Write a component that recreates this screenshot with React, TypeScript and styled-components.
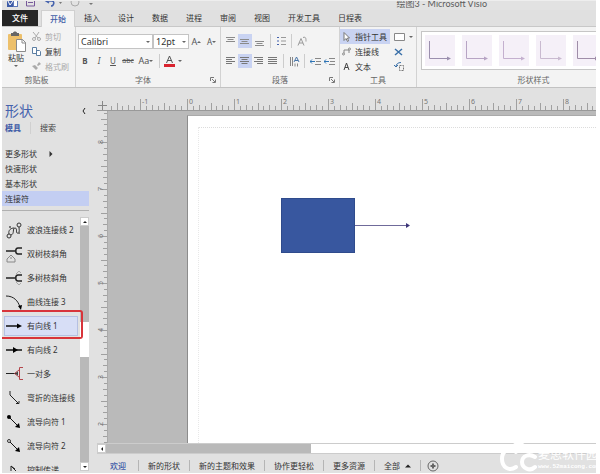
import React, { useState } from "react";
import styled, { createGlobalStyle, css } from "styled-components";

const Global = createGlobalStyle`
  *, *::before, *::after { box-sizing: border-box; }
  html, body { margin: 0; background: #fff; }
  body, button, input, select {
    font-family: "Noto Sans", "Noto Sans CJK SC", sans-serif;
    font-size: 8px;
    line-height: 12px;
    color: #333;
  }
  button {
    border: 0; padding: 0; margin: 0; background: none; white-space: nowrap;
    display: inline-flex; align-items: center;
  }
  svg { display: block; flex: none; }
`;

const Window = styled.div`
  position: relative;
  height: 100vh;
  padding: 0 4px 1px 2px;
  display: grid;
  grid-template-rows: 10px 17px 61px 1fr;
  overflow: hidden;
`;

const TitleBar = styled.header`
  display: flex;
  align-items: flex-end;
  justify-content: space-between;
  overflow: hidden;
  background: #e2e2e2;
  border-top: 1px solid #eee;
`;
const WindowTitle = styled.span`
  margin-right: 109px;
  font-family: Lato, "Noto Sans CJK SC", sans-serif;
  font-size: 9px;
  color: #5c5c5c;
`;

const TabBar = styled.nav`
  display: flex;
  background: #e0e0e0;
  border-bottom: 1px solid #c8c8c8;
`;
const RibbonTab = styled.button<{ $kind?: "file" | "active" }>`
  justify-content: center;
  padding: 0 9px;
  height: 16px;
  ${(p) => p.$kind === "file" && css`
    background: #262626; color: #fff; padding: 0 10px; margin-right: 3px; font-weight: 500;
  `}
  ${(p) => p.$kind === "active" && css`
    background: #f4f4f4; color: #3f5da8; padding: 0 8px; height: 17px; font-weight: 500;
    border: 1px solid #d0d0d0; border-bottom: 0;
  `}
`;

const Ribbon = styled.section`
  display: grid;
  grid-template-columns: 74px 145px 119px 77px minmax(0, 1fr);
  background: #f3f3f3;
  border-bottom: 1px solid #c2c2c2;
`;
const Group = styled.div`
  display: grid;
  grid-template-rows: 47px 12px;
  border-right: 1px solid #d2d2d2;
  &:last-child { border-right: 0; }
`;
const GroupLabel = styled.div<{ $lead?: number }>`
  display: grid;
  grid-template-columns: ${(p) => p.$lead ?? 10}px 1fr 10px;
  text-align: center;
  color: #666;
  svg { align-self: center; }
`;
const Clipboard = styled.div`
  display: grid;
  grid-template-columns: 28px 1fr;
`;
const PasteButton = styled.button`
  flex-direction: column;
  padding-top: 4px;
`;
const Stack = styled.div`
  display: flex;
  flex-direction: column;
  padding-top: 2px;
`;
const ToolButton = styled.button<{ $muted?: boolean; $on?: boolean }>`
  height: 15px;
  gap: 4px;
  padding-left: 2px;
  color: ${(p) => (p.$muted ? "#aaa" : "#333")};
  background: ${(p) => (p.$on ? "#c9d3f2" : "transparent")};
`;
const FontRows = styled.div`
  display: flex;
  flex-direction: column;
  gap: 5px;
  padding: 7px 0 0 2px;
`;
const Row = styled.div`
  display: flex;
  align-items: center;
`;
const Select = styled.div<{ $w: number }>`
  position: relative;
  width: ${(p) => p.$w}px;
  select {
    display: block;
    width: 100%;
    height: 15px;
    padding: 0 2px;
    font-size: 9px;
    appearance: none;
    border: 1px solid #c4c4c4;
    border-radius: 0;
    background: #fff;
  }
  svg { position: absolute; right: 3px; top: 6px; pointer-events: none; }
`;
const Glyph = styled.button<{ $w?: number; $size?: number; $on?: boolean }>`
  justify-content: center;
  width: ${(p) => p.$w ?? 14}px;
  height: 14px;
  font-size: ${(p) => p.$size ?? 8}px;
  color: #555;
  background: ${(p) => (p.$on ? "#c9d3f2" : "transparent")};
`;
const Rule = styled.span`
  width: 1px;
  height: 14px;
  margin: 0 3px;
  background: #ccc;
`;
const ParaRows = styled.div`
  display: flex;
  flex-direction: column;
  gap: 6px;
  padding: 7px 0 0 2px;
`;
const Tools = styled.div`
  display: grid;
  grid-template-columns: 50px 1fr;
  gap: 2px;
`;
const Gallery = styled.div`
  display: flex;
  gap: 7px;
  height: 39px;
  margin: 4px 0 0 4px;
  padding: 3px;
  overflow: hidden;
  background: #fff;
  border: 1px solid #c6c6c6;
  border-right: 0;
`;
const StyleTile = styled.button`
  flex: none;
  justify-content: center;
  width: 30px;
  height: 31px;
  background: #f5f0f8;
`;

const Workspace = styled.main`
  min-height: 0;
  display: grid;
  grid-template-columns: 87px minmax(0, 1fr);
  gap: 8px;
  padding-top: 8px;
  background: #e1e1e1;
`;
const Sidebar = styled.aside`
  min-height: 0;
  display: flex;
  flex-direction: column;
`;
const SidebarHead = styled.div`
  display: flex;
  align-items: center;
  justify-content: space-between;
  padding: 5px 3px 0;
  h2 {
    margin: 0;
    font-size: 14px;
    line-height: 20px;
    font-weight: 400;
    color: #4562ad;
  }
`;
const Modes = styled.div`
  display: flex;
  gap: 9px;
  padding: 1px 3px 12px;
`;
const Mode = styled.button<{ $on?: boolean }>`
  color: ${(p) => (p.$on ? "#3c59a6" : "#444")};
  font-weight: ${(p) => (p.$on ? 700 : 400)};
  & + & { border-left: 1px solid #d0d0d0; padding-left: 9px; }
`;
const Stencil = styled.button<{ $on?: boolean }>`
  flex: none;
  gap: 11px;
  height: 15px;
  padding-left: 3px;
  background: ${(p) => (p.$on ? "#c3cef2" : "transparent")};
`;
const Shapes = styled.div`
  flex: 1;
  min-height: 0;
  display: grid;
  grid-template-columns: 76px 9px;
  gap: 2px;
  margin-top: 4px;
  padding: 6px 0 2px;
  border-top: 1px solid #b0b0b0;
`;
const ShapeList = styled.div`
  min-height: 0;
  overflow: hidden;
  display: flex;
  flex-direction: column;
`;
const ShapeItem = styled.button<{ $on?: boolean }>`
  flex: none;
  gap: 4px;
  height: 20px;
  margin: 3px 0 1px 2px;
  padding-left: 1px;
  border: 1px solid ${(p) => (p.$on ? "#b5c0e2" : "transparent")};
  background: ${(p) => (p.$on ? "#d7def6" : "transparent")};
`;
const VScroll = styled.div`
  display: flex;
  flex-direction: column;
  background: #b9b9b9;
`;
const ScrollButton = styled.button`
  flex: none;
  justify-content: center;
  width: 9px;
  height: 9px;
  background: #fff;
  border: 1px solid #ccc;
`;
const VThumb = styled.div`
  height: 35px;
  margin: 96px 0 auto;
  background: #fff;
`;
const Highlight = styled.div`
  position: absolute;
  left: 2px;
  top: 310px;
  width: 81px;
  height: 29px;
  border: 2px solid #d8343a;
  border-left: 0;
  border-radius: 0 3px 3px 0;
  pointer-events: none;
`;

const Editor = styled.section`
  min-height: 0;
  min-width: 0;
  display: grid;
  grid-template-columns: 11px minmax(0, 1fr);
  grid-template-rows: 15px minmax(0, 1fr) 11px 19px;
`;
const TopRuler = styled.div`
  grid-column: 1 / -1;
  overflow: hidden;
  border-bottom: 1px solid #999;
`;
const SideRuler = styled.div`
  overflow: hidden;
  border-right: 1px solid #aaa;
`;
const Desk = styled.div`
  overflow: hidden;
  display: flex;
  padding: 4px 0 0 79px;
  background: #bababa;
`;
const Page = styled.div`
  position: relative;
  flex: 1;
  padding: 11px 0 0 10px;
  background: #fff;
  border-left: 1px solid #8c8c8c;
  border-top: 1px solid #aaa;
`;
const Margins = styled.div`
  height: 100%;
  border-top: 1px dotted #dcdcdc;
  border-left: 1px dotted #e8e8e8;
`;
const Box = styled.div`
  position: absolute;
  left: 93px;
  top: 82px;
  width: 74px;
  height: 55px;
  background: #38579f;
  border: 1px solid #2f4b8c;
`;
const Connector = styled.svg`
  position: absolute;
  left: 167px;
  top: 106px;
`;
const HScroll = styled.div`
  grid-column: 1 / -1;
  display: grid;
  grid-template-columns: 10px 204fr 285fr;
  border-top: 1px solid #ccc;
  border-bottom: 1px solid #ccc;
  background: #b9b9b9;
`;
const HThumb = styled.div`
  grid-column: 3;
  background: #fff;
`;
const Sheets = styled.nav`
  grid-column: 1 / -1;
  display: flex;
  align-items: center;
  padding: 4px 0 0 3px;
`;
const Sheet = styled.button<{ $on?: boolean }>`
  gap: 5px;
  height: 11px;
  padding: 0 9px;
  border-right: 1px solid #b5b5b5;
  color: ${(p) => (p.$on ? "#3c59a6" : "#333")};
  font-weight: ${(p) => (p.$on ? 500 : 400)};
  &:first-child { padding: 0 12px 0 10px; }
`;
const AddSheet = styled.button`
  padding-left: 6px;
`;
const Watermark = styled.div`
  position: absolute;
  right: 4px;
  bottom: 0;
  width: 98px;
  height: 32px;
  display: flex;
  overflow: hidden;
  color: #fff;
  white-space: nowrap;
  div { padding-top: 6px; font-size: 12px; line-height: 14px; }
  small { display: block; font: 6px/10px "Liberation Mono", monospace; font-weight: 700; }
`;

const Caret = ({ dir = "down", color = "#666", size = 4 }: { dir?: "down" | "up" | "left" | "right"; color?: string; size?: number }) => {
  const d = { down: "M0 1h4L2 3z", up: "M0 3h4L2 1z", left: "M3 0v4L1 2z", right: "M1 0v4l2-2z" }[dir];
  return <svg width={size} height={size} viewBox="0 0 4 4"><path d={d} fill={color} /></svg>;
};

const Launcher = () => (
  <svg width="6" height="6" viewBox="0 0 6 6" fill="none" stroke="#777"><path d="M.5 4V.5H4M2 2l3 3M5.500 2.500v3h-3" /></svg>
);

const Lines = ({ align, rows = 4 }: { align: "l" | "c" | "r" | "j" | "t" | "m" | "b"; rows?: number }) => {
  const vertical = "tmb".includes(align);
  const n = vertical ? 3 : rows;
  const y0 = align === "b" ? 5 : align === "m" ? 3 : 1;
  return (
    <svg width="10" height="11" viewBox="0 0 10 11" stroke={vertical ? "#8b8b8b" : "#777"}>
      {Array.from({ length: n }, (_, i) => {
        const w = i % 2 === 0 ? 9 : 6;
        const x = align === "l" ? 0 : align === "r" ? 9 - w : align === "j" ? 0 : (9 - w) / 2;
        const y = y0 + i * 2 + 0.5;
        return <line key={i} x1={x} x2={align === "j" ? 9 : x + w} y1={y} y2={y} />;
      })}
    </svg>
  );
};

const shapeIcons: Record<string, React.ReactNode> = {
  wave: <g fill="none" stroke="#333"><circle cx="3" cy="14" r="2" /><circle cx="13" cy="3" r="2" /><path d="M5 13c4-1 1-7 4-7s0 6 3 5c2-1 1-3 1-6M3 12C2 8 5 6 8 6" /><path d="M3 4l2 2M5 4L3 6M12 10l2 2M14 10l-2 2" stroke="#777" /></g>,
  double: <g fill="none" stroke="#222"><path d="M0 5h9M16 2h-4c-3 0-3 6 0 6h4" strokeWidth="1.500" /><path d="M1 16v-3l4-4 4 4v3zM5 13v-2" stroke="#888" /></g>,
  multi: <g fill="none" stroke="#222"><path d="M0 8h9M16 5h-4c-3 0-3 6 0 6h4" strokeWidth="1.500" /><path d="M10 4l3-3 2 2M10 12l3 3 2-2" stroke="#aaa" /></g>,
  curve: <g><path d="M0 2c8 0 12 5 14 11" fill="none" stroke="#222" /><path d="M12 12l4-1-1 5z" /></g>,
  arrow: <g><path d="M0 8h12" stroke="#111" strokeWidth="1.500" /><path d="M11 5.500l5 2.500-5 2.500z" /></g>,
  arrow2: <g><path d="M0 8h16" stroke="#111" strokeWidth="1.500" /><path d="M7 5l5 3-5 3z" /></g>,
  many: <g fill="none"><path d="M0 7.500h10" stroke="#222" /><path d="M17 1.500h-3.500v12H17M13 4L8.500 7.500 13 11" stroke="#b4454b" /><path d="M9 7.500l3-2v4z" fill="#444" /></g>,
  bend: <g fill="none" stroke="#222"><path d="M4 1v4l8 8" /><path d="M10 13.500h3V11" /></g>,
  flow1: <g><path d="M3 3l10 10" stroke="#111" /><circle cx="3" cy="3" r="2" /><path d="M14 14l-5-1 4-4z" /></g>,
  flow2: <g><path d="M4 4l9 9" stroke="#111" /><circle cx="3" cy="3" r="1.500" fill="none" stroke="#333" /><path d="M14 14l-5-1 4-4z" /></g>,
  control: <path d="M0 11h5V4l7 7h4M5 4l4 3" fill="none" stroke="#222" />,
};

const shapes: [string, string][] = [
  ["wave", "波浪连接线 2"], ["double", "双树枝斜角"], ["multi", "多树枝斜角"], ["curve", "曲线连接 3"],
  ["arrow", "有向线 1"], ["arrow2", "有向线 2"], ["many", "一对多"], ["bend", "弯折的连接线"],
  ["flow1", "流导向符 1"], ["flow2", "流导向符 2"], ["control", "控制传递"],
];

const INCH = 47;
const tickLength = (i: number) => (i % 8 === 0 ? 11 : i % 4 === 0 ? 7 : i % 2 === 0 ? 5 : 4);

const HorizontalRuler = () => (
  <svg width="100%" height="15">
    {Array.from({ length: 240 }, (_, n) => n - 13).map((i) => {
      const x = Math.round(90 + (i * INCH) / 8) + 0.5;
      return <line key={i} x1={x} x2={x} y1={14 - tickLength(Math.abs(i))} y2="14" stroke="#a0a0a0" />;
    })}
    {[-1, 0, 1, 2, 3, 4, 5, 6, 7, 8].map((i) => (
      <text key={i} x={92 + i * INCH} y="8" fontSize="7" fill="#777">{i}</text>
    ))}
    <path d="M1 9.500h9M5.500 5v9" stroke="#888" />
  </svg>
);

const VerticalRuler = () => (
  <svg width="11" height="100%">
    {Array.from({ length: 200 }, (_, i) => {
      const y = Math.round(31 + ((i - 5) * INCH) / 8) + 0.5;
      return <line key={i} y1={y} y2={y} x1={11 - Math.min(tickLength(Math.abs(i - 5)), 8)} x2="11" stroke="#a0a0a0" />;
    })}
    {[8, 7, 6, 5, 4, 3, 2].map((v, i) => {
      const y = 33 + i * INCH;
      return <text key={v} x="6" y={y} fontSize="7" fill="#777" transform={`rotate(-90 6 ${y})`}>{v}</text>;
    })}
  </svg>
);

export default function App() {
  const [selected, setSelected] = useState("arrow");
  return (
    <>
      <Global />
      <Window>
        <TitleBar>
          <svg width="96" height="9" viewBox="0 0 96 9" fill="none">
            <rect x="5" y="-3" width="9" height="9" fill="#3f5da8" /><path d="M6 0l2 4 3-4" stroke="#fff" />
            <rect x="11.500" y="-.5" width="4" height="6" fill="#fff" stroke="#6179b8" />
            <path d="M24.500-2v7h8v-7M26 1.500h5" stroke="#77599a" />
            <path d="M45 0h5c3 0 2 5-1 5M47-2l-3 2 3 2" stroke="#4562ad" strokeWidth="1.500" />
            <path d="M57 1h3l-1.500 2zM87 2h4l-2 2z" fill="#777" />
            <circle cx="73" cy="1" r="4" stroke="#aaa" />
          </svg>
          <WindowTitle>绘图3 - Microsoft Visio</WindowTitle>
        </TitleBar>

        <TabBar>
          <RibbonTab $kind="file">文件</RibbonTab>
          <RibbonTab $kind="active">开始</RibbonTab>
          {["插入", "设计", "数据", "进程", "审阅", "视图", "开发工具", "日程表"].map((t) => (
            <RibbonTab key={t}>{t}</RibbonTab>
          ))}
        </TabBar>

        <Ribbon>
          <Group>
            <Clipboard>
              <PasteButton>
                <svg width="19" height="21" viewBox="0 0 19 21">
                  <rect x="1" y="3" width="14" height="16" rx="1" fill="#edc06b" />
                  <path d="M4 5V2h2c0-2 4-2 4 0h2v3z" fill="#666" />
                  <path d="M9.500 8.500h6l3 3v9h-9z" fill="#fff" stroke="#8b8b8b" /><path d="M15 8v4h4" fill="none" stroke="#8b8b8b" />
                </svg>
                粘贴
                <Caret />
              </PasteButton>
              <Stack>
                <ToolButton $muted>
                  <svg width="9" height="9" viewBox="0 0 9 9" fill="none" stroke="#aaa"><path d="M1 0l5 6M7 0L3 6" /><circle cx="2" cy="7" r="1.500" /><circle cx="7" cy="7" r="1.500" /></svg>
                  剪切
                </ToolButton>
                <ToolButton>
                  <svg width="9" height="9" viewBox="0 0 9 9" fill="#fff" stroke="#5c7fa3"><path d="M.5.5h4v6h-4zM4.500 3.500h3l1 1v4h-4z" /></svg>
                  复制
                </ToolButton>
                <ToolButton $muted>
                  <svg width="9" height="9" viewBox="0 0 9 9"><path d="M5 3l2-3 2 2-3 2zM0 4l3-1 3 3-2 2z" fill="#aaa" /></svg>
                  格式刷
                </ToolButton>
              </Stack>
            </Clipboard>
            <GroupLabel $lead={6}><i /><span>剪贴板</span></GroupLabel>
          </Group>

          <Group>
            <FontRows>
              <Row>
                <Select $w={75}><select aria-label="字体"><option>Calibri</option></select><Caret /></Select>
                <Select $w={36}><select aria-label="字号"><option>12pt</option></select><Caret /></Select>
                <Glyph $w={15} $size={9}>A<Caret dir="up" /></Glyph>
                <Glyph $w={15}>A<Caret /></Glyph>
              </Row>
              <Row>
                <Glyph><b>B</b></Glyph>
                <Glyph><i>I</i></Glyph>
                <Glyph><u>U</u></Glyph>
                <Glyph $w={16} $size={7}><s>abc</s></Glyph>
                <Glyph $w={20} $size={9}>Aa<Caret /></Glyph>
                <Rule />
                <Glyph $w={12}>
                  <svg width="11" height="12" viewBox="0 0 11 12"><path d="M2.500 8l3-7 3 7M3.500 5.500h4" fill="none" stroke="#555" /><rect y="9" width="11" height="3" fill="#d9232e" /></svg>
                </Glyph>
                <Glyph $w={9}><Caret /></Glyph>
              </Row>
            </FontRows>
            <GroupLabel $lead={0}><i /><span>字体</span><Launcher /></GroupLabel>
          </Group>

          <Group>
            <ParaRows>
              <Row>
                <Glyph $w={15}><Lines align="t" /></Glyph>
                <Glyph $on><Lines align="m" /></Glyph>
                <Glyph $w={15}><Lines align="b" /></Glyph>
                <Rule />
                <Glyph>
                  <svg width="9" height="10" viewBox="0 0 9 10"><path d="M0 1.500h2M0 5h2M0 8.500h2" stroke="#4562ad" /><path d="M4 1.500h5M4 5h5M4 8.500h5" stroke="#999" /></svg>
                </Glyph>
                <Rule />
                <Glyph>
                  <svg width="10" height="10" viewBox="0 0 10 10" fill="none" stroke="#999"><path d="M1 9.500l3-7 3 7M2 7h4M6 1.500c3-1 3 1 3 4" /></svg>
                </Glyph>
              </Row>
              <Row>
                <Glyph $w={15}><Lines align="l" /></Glyph>
                <Glyph $on><Lines align="c" /></Glyph>
                <Glyph><Lines align="r" /></Glyph>
                <Glyph><Lines align="j" /></Glyph>
                <Rule />
                <Glyph>
                  <svg width="11" height="11" viewBox="0 0 11 11" fill="none"><path d="M1.500 1v9M3.500 1v9M6 7.500v3M8.500 7.500v3" stroke="#888" /><path d="M5 6l2.500-5L10 6M6 4.500h3" stroke="#4a76a8" /></svg>
                </Glyph>
                <Rule />
                {[0, 1].map((k) => (
                  <Glyph key={k}>
                    <svg width="11" height="9" viewBox="0 0 11 9" fill="none"><path d="M5 1.500h6M6 4.500h5M5 7.500h6" stroke="#888" /><path d="M5 4.500H0M2 2.500l-2 2 2 2" stroke="#2f74b5" /></svg>
                  </Glyph>
                ))}
              </Row>
            </ParaRows>
            <GroupLabel><i /><span>段落</span><Launcher /></GroupLabel>
          </Group>

          <Group>
            <Tools>
              <Stack>
                <ToolButton $on>
                  <svg width="9" height="10" viewBox="0 0 9 10"><path d="M2 .5v8l2-2 1.500 3 1-.5-1-3h2z" fill="#fff" stroke="#777" /></svg>
                  指针工具
                </ToolButton>
                <ToolButton>
                  <svg width="9" height="9" viewBox="0 0 9 9" fill="none" stroke="#888"><path d="M2 6V3h5v3" /><circle cx="1.500" cy="7" r="1" /><circle cx="7.500" cy="2" r="1" /></svg>
                  连接线
                </ToolButton>
                <ToolButton>
                  <svg width="9" height="9" viewBox="0 0 9 9" fill="none" stroke="#444"><path d="M2 8l2.500-7L7 8M3 5.500h3" /></svg>
                  文本
                </ToolButton>
              </Stack>
              <Stack>
                <ToolButton aria-label="矩形">
                  <svg width="11" height="8" viewBox="0 0 11 8"><path d="M.5.5h10v7H.5z" fill="#fff" stroke="#888" /></svg>
                  <Caret />
                </ToolButton>
                <ToolButton aria-label="连接点">
                  <svg width="9" height="8" viewBox="0 0 9 8"><path d="M1 1l7 6M8 1L1 7" stroke="#3a70a8" strokeWidth="1.500" /></svg>
                </ToolButton>
                <ToolButton aria-label="文本块">
                  <svg width="10" height="9" viewBox="0 0 10 9" fill="none"><path d="M5.500 3.500h4v5h-4z" stroke="#777" strokeDasharray="2 1" /><path d="M7 .5C4 .5 2 2 2 5M0 3l2 2 2-2" stroke="#3a70a8" /></svg>
                </ToolButton>
              </Stack>
            </Tools>
            <GroupLabel><i /><span>工具</span></GroupLabel>
          </Group>

          <Group>
            <Gallery>
              {["#9b8fae", "#b7a4c4", "#c4b0cf", "#c9bad0", "#9f8da8"].map((c, i) => (
                <StyleTile key={i} aria-label={`样式 ${i + 1}`}>
                  <svg width="22" height="20" viewBox="0 0 22 20"><path d="M.5 0v17.500H19" fill="none" stroke={c} /><path d="M18 15.500l4 2-4 2z" fill={c} /></svg>
                </StyleTile>
              ))}
            </Gallery>
            <GroupLabel $lead={64}><i /><span>形状样式</span><i /></GroupLabel>
          </Group>
        </Ribbon>

        <Workspace>
          <Sidebar>
            <SidebarHead>
              <h2>形状</h2>
              <button aria-label="折叠"><svg width="4" height="6" viewBox="0 0 4 6" fill="none" stroke="#222"><path d="M3 0L1 3l2 3" /></svg></button>
            </SidebarHead>
            <Modes><Mode $on>模具</Mode><Mode>搜索</Mode></Modes>
            <Stencil>更多形状 <Caret dir="right" color="#333" size={6} /></Stencil>
            <Stencil>快速形状</Stencil>
            <Stencil>基本形状</Stencil>
            <Stencil $on>连接符</Stencil>
            <Shapes>
              <ShapeList>
                {shapes.map(([id, label]) => (
                  <ShapeItem key={id} $on={id === selected} onClick={() => setSelected(id)}>
                    <svg width="17" height="17" viewBox="0 0 17 17">{shapeIcons[id]}</svg>
                    {label}
                  </ShapeItem>
                ))}
              </ShapeList>
              <VScroll>
                <ScrollButton aria-label="向上"><Caret dir="up" color="#222" /></ScrollButton>
                <VThumb />
                <ScrollButton aria-label="向下"><Caret color="#222" /></ScrollButton>
              </VScroll>
            </Shapes>
          </Sidebar>

          <Editor>
            <TopRuler><HorizontalRuler /></TopRuler>
            <SideRuler><VerticalRuler /></SideRuler>
            <Desk>
              <Page>
                <Margins />
                <Box />
                <Connector width="56" height="6" viewBox="0 0 56 6"><path d="M0 3.500h52" stroke="#6f6a9a" /><path d="M51 1l4 2.500L51 6z" fill="#3b3478" /></Connector>
              </Page>
            </Desk>
            <HScroll>
              <ScrollButton aria-label="向左"><Caret dir="left" color="#222" /></ScrollButton>
              <HThumb />
            </HScroll>
            <Sheets>
              <Sheet $on>欢迎</Sheet>
              {["新的形状", "新的主题和效果", "协作更轻松", "更多资源"].map((s) => <Sheet key={s}>{s}</Sheet>)}
              <Sheet>全部 <Caret dir="up" color="#222" size={6} /></Sheet>
              <AddSheet aria-label="新建页">
                <svg width="12" height="12" viewBox="0 0 12 12" fill="none" stroke="#666"><circle cx="6" cy="6" r="5" /><path d="M6 3.500v5M3.500 6h5" strokeWidth="2" /></svg>
              </AddSheet>
            </Sheets>
          </Editor>
        </Workspace>

        <Highlight />
        <Watermark>
          <svg width="40" height="31" viewBox="0 0 40 31" fill="none" stroke="#fff" strokeWidth="4" strokeLinecap="round">
            <path d="M18 10C11 4 4 9 4 17s7 13 14 8M37 15c-6-4-13-1-13 5s8 10 13 5M14 7c3-7 11-7 14 1" />
          </svg>
          <div>麦思软件园<small>www.52maicong.com</small></div>
        </Watermark>
      </Window>
    </>
  );
}
